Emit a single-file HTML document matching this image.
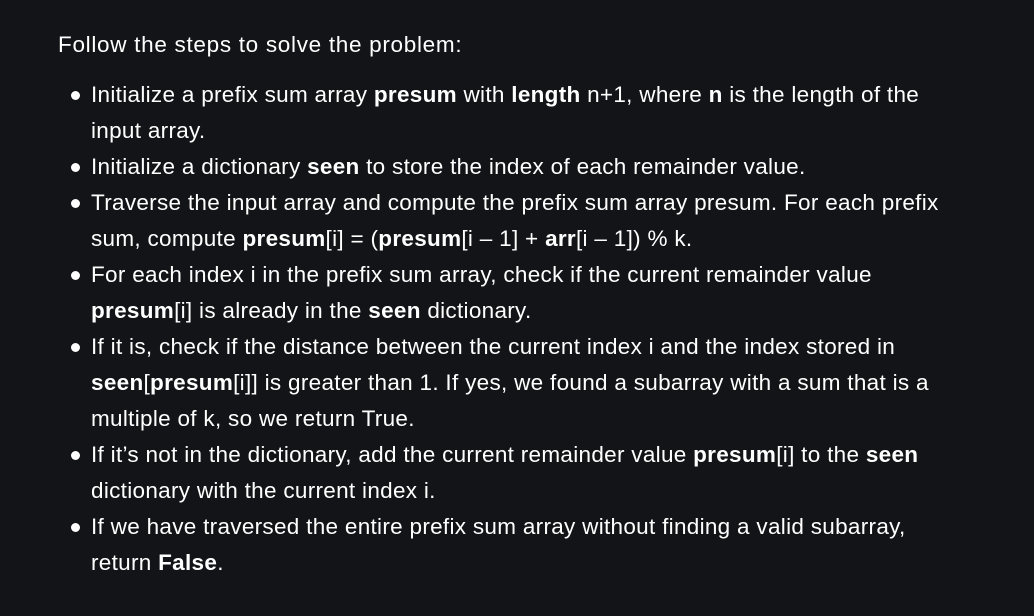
<!DOCTYPE html>
<html><head><style>
html,body{margin:0;padding:0;background:#131417;width:1034px;height:616px;overflow:hidden}
body{font-family:"Liberation Sans",sans-serif;color:#fff;font-size:22.5px;letter-spacing:0.3px}
p{position:absolute;left:58px;top:29px;margin:0;line-height:32px;white-space:nowrap;letter-spacing:0.7px}
ul{position:absolute;left:0;top:77px;margin:0;padding:0 0 0 91px;list-style:none}
li{position:relative;line-height:36px;white-space:nowrap}
li:before{content:"";position:absolute;left:-20px;top:14px;width:9px;height:9px;border-radius:50%;background:#fff}
b{font-weight:bold}
</style></head><body>
<p>Follow the steps to solve the problem:</p>
<ul>
<li>Initialize a prefix sum array <b>presum</b> with <b>length</b> n+1, where <b>n</b> is the length of the<br>input array.</li>
<li>Initialize a dictionary <b>seen</b> to store the index of each remainder value.</li>
<li>Traverse the input array and compute the prefix sum array presum. For each prefix<br>sum, compute <b>presum</b>[i] = (<b>presum</b>[i – 1] + <b>arr</b>[i – 1]) % k.</li>
<li>For each index i in the prefix sum array, check if the current remainder value<br><b>presum</b>[i] is already in the <b>seen</b> dictionary.</li>
<li>If it is, check if the distance between the current index i and the index stored in<br><b>seen</b>[<b>presum</b>[i]] is greater than 1. If yes, we found a subarray with a sum that is a<br>multiple of k, so we return True.</li>
<li>If it’s not in the dictionary, add the current remainder value <b>presum</b>[i] to the <b>seen</b><br>dictionary with the current index i.</li>
<li>If we have traversed the entire prefix sum array without finding a valid subarray,<br>return <b>False</b>.</li>
</ul>
</body></html>
